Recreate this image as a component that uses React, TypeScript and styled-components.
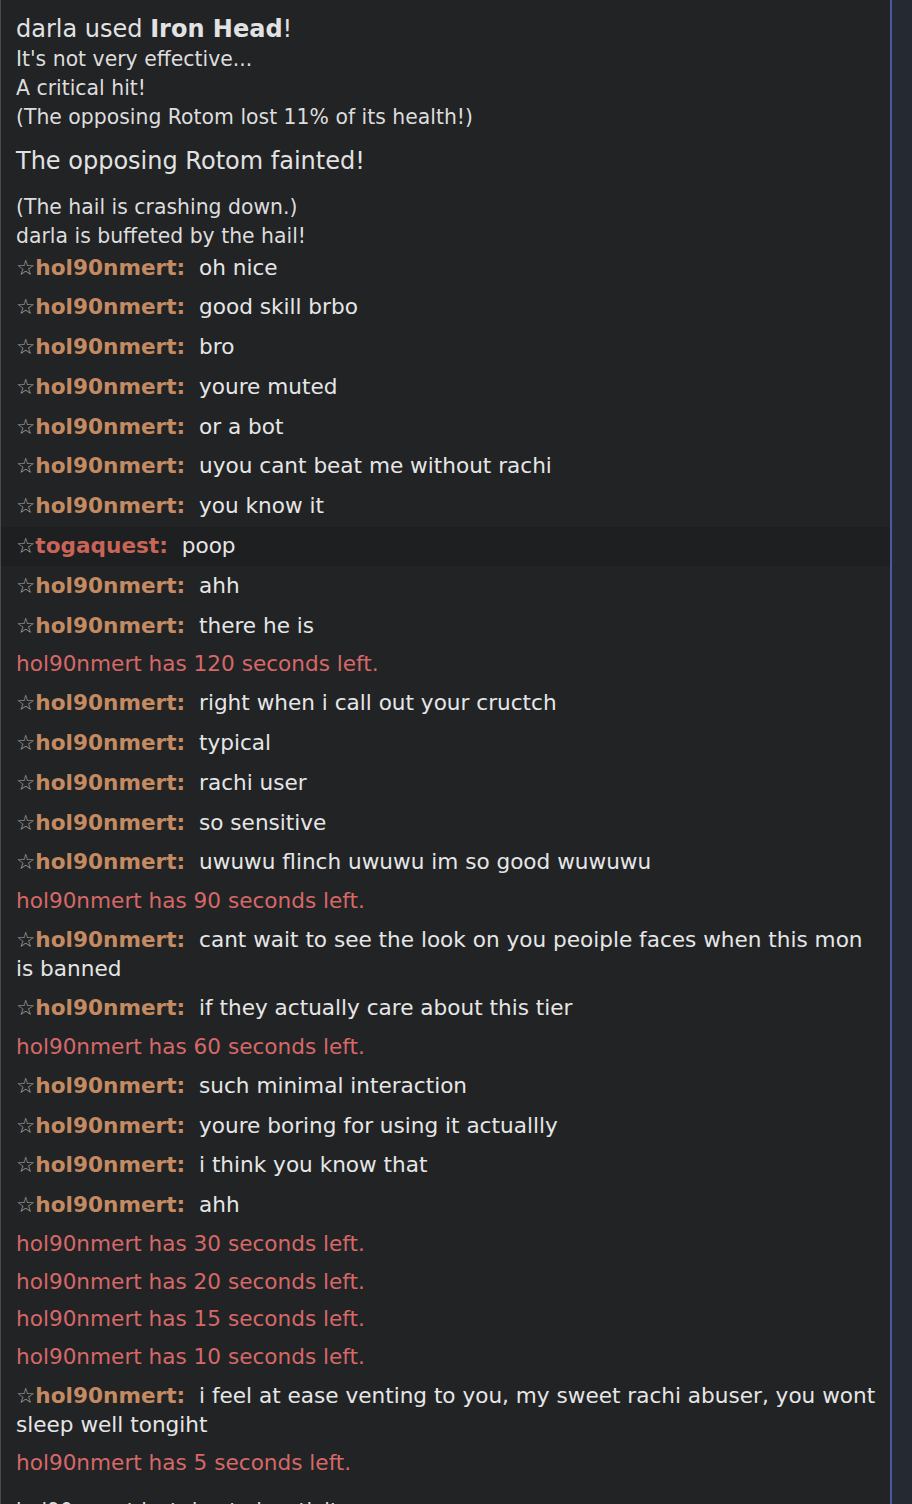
import styled, { createGlobalStyle } from "styled-components";

type Entry =
  | { kind: "chat"; user: string; color: string; text: string; highlight?: boolean }
  | { kind: "timer"; text: string };

const HOL = "#c48a62";
const TOGA = "#c86458";

const chat = (text: string, user = "hol90nmert", color = HOL, highlight = false): Entry => ({
  kind: "chat",
  user,
  color,
  text,
  highlight,
});
const timer = (secs: number): Entry => ({ kind: "timer", text: `hol90nmert has ${secs} seconds left.` });

const entries: Entry[] = [
  chat("oh nice"),
  chat("good skill brbo"),
  chat("bro"),
  chat("youre muted"),
  chat("or a bot"),
  chat("uyou cant beat me without rachi"),
  chat("you know it"),
  chat("poop", "togaquest", TOGA, true),
  chat("ahh"),
  chat("there he is"),
  timer(120),
  chat("right when i call out your cructch"),
  chat("typical"),
  chat("rachi user"),
  chat("so sensitive"),
  chat("uwuwu flinch uwuwu im so good wuwuwu"),
  timer(90),
  chat("cant wait to see the look on you peoiple faces when this mon is banned"),
  chat("if they actually care about this tier"),
  timer(60),
  chat("such minimal interaction"),
  chat("youre boring for using it actuallly"),
  chat("i think you know that"),
  chat("ahh"),
  timer(30),
  timer(20),
  timer(15),
  timer(10),
  chat("i feel at ease venting to you, my sweet rachi abuser, you wont sleep well tongiht"),
  timer(5),
];

const GlobalStyle = createGlobalStyle`
  html, body {
    margin: 0;
    padding: 0;
    background: #252932;
  }
  body {
    font-family: "DejaVu Sans", Verdana, sans-serif;
  }
`;

const Page = styled.div`
  display: flex;
  height: 1504px;
  overflow: hidden;
`;

const Log = styled.div`
  width: 889px;
  flex-shrink: 0;
  background: #222325;
  border-left: 1px solid #474b51;
  border-right: 2px solid #4c59a0;
  padding-top: 14px;
  color: #dddddd;
`;

const Side = styled.div`
  flex: 1;
  background: #252932;
`;

const BattleBlock = styled.div<{ $gap?: number }>`
  padding: 0 10px 0 15px;
  margin-top: ${({ $gap }) => $gap ?? 0}px;
`;

const BigLine = styled.div<{ $tall?: boolean }>`
  font-size: 24px;
  line-height: ${({ $tall }) => ($tall ? 31 : 30)}px;
  color: #e2e2e2;
`;

const SmallLine = styled.div`
  font-size: 20.4px;
  line-height: 29px;
  color: #dddddd;
`;

const ChatList = styled.div`
  margin-top: -3px;
`;

const ChatRow = styled.div<{ $highlight?: boolean }>`
  padding: 5.5px 10px 5.5px 15px;
  font-size: 21.6px;
  line-height: 28.8px;
  background: ${({ $highlight }) => ($highlight ? "#1e1f21" : "transparent")};
`;

const Star = styled.span`
  color: #a9a9a2;
  font-weight: normal;
`;

const UserName = styled.strong<{ $color: string }>`
  color: ${({ $color }) => $color};
  font-weight: bold;
`;

const Message = styled.span`
  color: #e6e6e6;
  margin-left: 7px;
`;

const TimerRow = styled.div`
  padding: 4.45px 10px 4.45px 15px;
  font-size: 21.6px;
  line-height: 28.8px;
  color: #d66868;
`;

export default function App() {
  return (
    <>
      <GlobalStyle />
      <Page>
        <Log>
          <BattleBlock>
            <BigLine $tall>
              darla used <strong>Iron Head</strong>!
            </BigLine>
            <SmallLine>It's not very effective...</SmallLine>
            <SmallLine>A critical hit!</SmallLine>
            <SmallLine>(The opposing Rotom lost 11% of its health!)</SmallLine>
          </BattleBlock>
          <BattleBlock $gap={14}>
            <BigLine>The opposing Rotom fainted!</BigLine>
          </BattleBlock>
          <BattleBlock $gap={17}>
            <SmallLine>(The hail is crashing down.)</SmallLine>
            <SmallLine>darla is buffeted by the hail!</SmallLine>
          </BattleBlock>
          <ChatList>
            {entries.map((e, i) =>
              e.kind === "chat" ? (
                <ChatRow key={i} $highlight={e.highlight}>
                  <Star>☆</Star>
                  <UserName $color={e.color}>{e.user}:</UserName> <Message>{e.text}</Message>
                </ChatRow>
              ) : (
                <TimerRow key={i}>{e.text}</TimerRow>
              )
            )}
          </ChatList>
          <BattleBlock $gap={14}>
            <SmallLine>hol90nmert lost due to inactivity.</SmallLine>
          </BattleBlock>
        </Log>
        <Side />
      </Page>
    </>
  );
}
